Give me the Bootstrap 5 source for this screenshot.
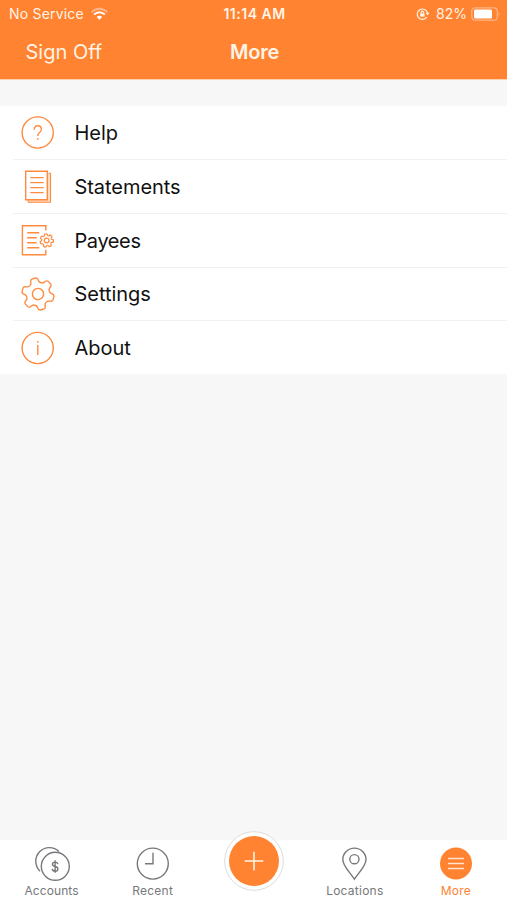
<!DOCTYPE html>
<html lang="en">
<head>
<meta charset="utf-8">
<meta name="viewport" content="width=device-width, initial-scale=1">
<title>More</title>
<link href="https://cdn.jsdelivr.net/npm/bootstrap@5.3.0/dist/css/bootstrap.min.css" rel="stylesheet">
<style>
:root { --brand: #ff8330; }
body { font-family: Inter, "Liberation Sans", sans-serif; background: #f7f7f7; height: 900px; overflow: hidden; }
svg { display: block; fill: none; flex: none; overflow: visible; }
.app-head { background: var(--brand); color: #fff3e6; height: 79px; box-shadow: 0 1px 0 #ffd0ae; }
.grid-3 { display: grid; grid-template-columns: 1fr auto 1fr; align-items: center; }
.status { height: 27px; font-size: 14px; padding: 0 7px 0 9px; }
.status .carrier { letter-spacing: .2px; }
.status .clock { letter-spacing: .5px; }
.title-row { height: 50px; font-size: 20px; padding: 0 24.5px 0 25.5px; }
.title-row .page-title { letter-spacing: -.2px; padding-left: 1px; }
.menu { margin-top: 27px; background: #fff; height: 268px; }
.menu-row { height: 53.7px; color: #111; font-size: 20px; padding: 2px 0 0 21px; letter-spacing: -.05px; }
.menu-row svg { stroke: #ff8b40; stroke-width: 1.4; margin-right: 19.5px; }
.menu-row .tight { letter-spacing: -.4px; }
.menu-row + .menu-row { background: linear-gradient(#f1f1f1, #f1f1f1) 13px 0 / 100% 1.3px no-repeat; }
.menu-row:first-child { height: 53.2px; padding-top: 1.4px; }
.tabs { height: 60px; background: #fff; color: #77787b; font-size: 12px; padding-left: 1px; }
.tabs svg { stroke: #77787b; stroke-width: 1.4; }
.tabs .tab-item { width: 101.1px; padding-top: 6px; letter-spacing: .25px; line-height: 14px; color: inherit; }
.tabs .tab-item.current { color: var(--brand); }
.tabs .tab-item svg { margin-bottom: 2px; }
.tabs .tab-item .snug { letter-spacing: .1px; }
.tabs .plus-item { width: 101.1px; margin-top: -9px; }
</style>
<script src="https://cdn.jsdelivr.net/npm/bootstrap@5.3.0/dist/js/bootstrap.bundle.min.js"></script>
</head>
<body class="d-flex flex-column">
<svg width="0" height="0" class="position-absolute">
  <defs>
    <path id="tooth-sm" d="M-5.16-10.72Q-3.9-11.3-3.6-12.6L-3.2-14.6Q-2.9-15.8-1.7-15.9Q0-16.1 1.7-15.9Q2.9-15.8 3.2-14.6L3.6-12.6Q3.9-11.3 5.16-10.72"/>
    <g id="gear-sm">
      <use href="#tooth-sm"/><use href="#tooth-sm" transform="rotate(51.43)"/><use href="#tooth-sm" transform="rotate(102.86)"/><use href="#tooth-sm" transform="rotate(154.29)"/><use href="#tooth-sm" transform="rotate(205.71)"/><use href="#tooth-sm" transform="rotate(257.14)"/><use href="#tooth-sm" transform="rotate(308.57)"/>
      <circle r="5.6"/>
    </g>
    <path id="tooth" d="M-5.8-10.05Q-4.3-10.95-4-12.5L-3.7-14.3Q-3.4-15.8-2-16Q0-16.2 2-16Q3.4-15.8 3.7-14.3L4-12.5Q4.3-10.95 5.8-10.05"/>
    <g id="gear">
      <use href="#tooth"/><use href="#tooth" transform="rotate(60)"/><use href="#tooth" transform="rotate(120)"/><use href="#tooth" transform="rotate(180)"/><use href="#tooth" transform="rotate(240)"/><use href="#tooth" transform="rotate(300)"/>
      <circle r="5.6"/>
    </g>
  </defs>
</svg>
<header class="app-head flex-shrink-0">
  <div class="status grid-3">
    <div class="d-flex align-items-center"><span class="carrier">No Service</span>
      <svg class="ms-2" width="16" height="12" viewBox="0 0 16 12" stroke-width="2"><path d="M-.6 4Q7.400-2.800 15.400 4" stroke="#ffb587"/><path d="M2 6.600Q7.400 2 12.800 6.600" stroke="#fff"/><path d="M4.600 9Q7.400 6.600 10.200 9L7.400 11.800Z" fill="#fff"/></svg>
    </div>
    <div class="clock fw-semibold">11:14 AM</div>
    <div class="d-flex align-items-center justify-content-end">
      <svg width="12" height="12" viewBox="0 0 12 12" stroke="#fff3e6" stroke-width="1.2"><path d="M10.700 9.200A5.200 5.200 0 1 1 11.500 5"/><path d="M9.700 4.800h3.800L11.600 7.400Z" fill="#fff3e6" stroke="none"/><rect x="4.200" y="5.400" width="4.400" height="3.200" fill="#fff3e6" stroke="none"/><path d="M5.100 5.600V4.400a1.300 1.300 0 0 1 2.600 0v1.200"/></svg>
      <span class="ms-2">82%</span>
      <svg class="ms-1" width="29" height="14" viewBox="0 0 29 14"><rect x=".8" y=".8" width="25.500" height="12.400" rx="3.500" stroke="#ffb587" stroke-width="1.2"/><rect x="3" y="2.600" width="18" height="8.800" rx="1.500" fill="#fff"/><path d="M27.600 4.800q2 2.200 0 4.400Z" fill="#ffb587"/></svg>
    </div>
  </div>
  <div class="title-row grid-3">
    <span>Sign Off</span><span class="page-title fw-semibold">More</span><span></span>
  </div>
</header>
<main class="flex-grow-1">
  <nav class="menu">
    <div class="menu-row d-flex align-items-center">
      <svg width="34" height="34" viewBox="0 0 34 34"><circle cx="16.700" cy="16.500" r="15.600"/><path d="M13.200 13.700q0-4 3.600-4t3.600 3.600q0 1.800-1.800 3.200t-1.800 3.600"/><path d="M16.800 22.100v1.600"/></svg><span>Help</span></div>
    <div class="menu-row d-flex align-items-center">
      <svg width="34" height="34" viewBox="0 0 34 34"><path d="M27.900 4v27H7.500" stroke="#ffd9c0" stroke-width="1.800"/><path d="M4.700 1.300h21.600v28.400H4.700Z"/><path d="M27.300 3.300h2.200v28.900H7.200v-1.900" stroke-width="1.100"/><path d="M9.300 7.600h13.400M9.300 12.600h13.400M9.300 17.600h13.400M9.300 22.600h13.400"/></svg><span>Statements</span></div>
    <div class="menu-row d-flex align-items-center">
      <svg width="34" height="34" viewBox="0 0 34 34"><path d="M24.800 6.500V1.800H1.400v29h23.400v-5"/><path d="M6.200 8.700h12M6.200 13.700h9.500M6.200 18.700h9.500M6.200 23.700h12"/><use href="#gear-sm" transform="translate(25.700 16.500) rotate(-8) scale(.42)" stroke-width="3"/></svg><span class="tight">Payees</span></div>
    <div class="menu-row d-flex align-items-center">
      <svg width="34" height="34" viewBox="0 0 34 34"><use href="#gear" transform="translate(17 17) rotate(-15)"/></svg><span>Settings</span></div>
    <div class="menu-row d-flex align-items-center">
      <svg width="34" height="34" viewBox="0 0 34 34"><circle cx="16.700" cy="17" r="15.600"/><path d="M16.800 14v10M16.800 10v1.700"/></svg><span>About</span></div>
  </nav>
</main>
<footer class="tabs d-flex flex-shrink-0">
  <div class="tab-item d-flex flex-column align-items-center">
    <svg width="36" height="36" viewBox="0 0 36 36"><path d="M6 25.200A13.700 13.700 0 1 1 25 5.400"/><circle cx="21.300" cy="20.300" r="14"/><path d="M23.800 18.100q-.3-2-2.700-2-2.600 0-2.600 2.100 0 1.900 2.600 2.300 2.800.5 2.800 2.400 0 2.200-2.800 2.200-2.700 0-2.800-2.200M21.100 14.300v12.500"/></svg><span class="snug">Accounts</span></div>
  <div class="tab-item d-flex flex-column align-items-center">
    <svg width="36" height="36" viewBox="0 0 36 36"><circle cx="17.800" cy="17.600" r="15.500"/><path d="M18 6.800v11h-8"/></svg>Recent</div>
  <div class="plus-item d-flex justify-content-center">
    <svg width="60" height="60" viewBox="0 0 60 60"><circle cx="30" cy="30" r="29.300" fill="#fff" style="stroke:#dcdcdc;stroke-width:1"/><circle cx="30" cy="30" r="25" fill="#ff8330" stroke="none"/><path d="M30 20.800v18.600M20.700 30h18.600" style="stroke:#fff3e6;stroke-width:1.600"/></svg></div>
  <div class="tab-item d-flex flex-column align-items-center">
    <svg width="36" height="36" viewBox="0 0 36 36"><path d="M17.400 33.200C12.400 25.500 5.800 20 5.800 13.400A11.600 11.300 0 0 1 29 13.400C29 20 22.400 25.500 17.400 33.200Z"/><circle cx="17.400" cy="13.200" r="4.600"/></svg>Locations</div>
  <div class="tab-item current d-flex flex-column align-items-center">
    <svg width="36" height="36" viewBox="0 0 36 36"><circle cx="18" cy="17.500" r="16" fill="#ff8330" stroke="none"/><path d="M10 12.500h16M10 17.500h16M10 22.500h16" style="stroke:#ffe3cc"/></svg>More</div>
</footer>
</body>
</html>
